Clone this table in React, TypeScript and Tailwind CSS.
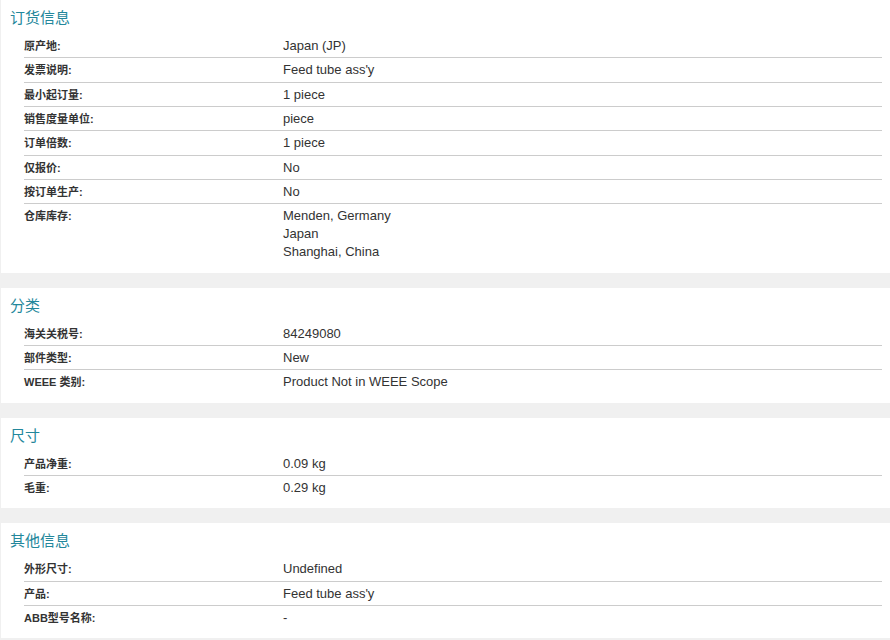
const sections = [
  {
    title: "订货信息",
    rows: [
      ["原产地:", ["Japan (JP)"]],
      ["发票说明:", ["Feed tube ass'y"]],
      ["最小起订量:", ["1 piece"]],
      ["销售度量单位:", ["piece"]],
      ["订单倍数:", ["1 piece"]],
      ["仅报价:", ["No"]],
      ["按订单生产:", ["No"]],
      ["仓库库存:", ["Menden, Germany", "Japan", "Shanghai, China"]],
    ],
  },
  {
    title: "分类",
    rows: [
      ["海关关税号:", ["84249080"]],
      ["部件类型:", ["New"]],
      ["WEEE 类别:", ["Product Not in WEEE Scope"]],
    ],
  },
  {
    title: "尺寸",
    rows: [
      ["产品净重:", ["0.09 kg"]],
      ["毛重:", ["0.29 kg"]],
    ],
  },
  {
    title: "其他信息",
    rows: [
      ["外形尺寸:", ["Undefined"]],
      ["产品:", ["Feed tube ass'y"]],
      ["ABB型号名称:", ["-"]],
    ],
  },
] as { title: string; rows: [string, string[]][] }[]

function Section({ title, rows }: { title: string; rows: [string, string[]][] }) {
  return (
    <div className="ml-[1px] mb-[15px] bg-white pt-[8px] pb-[9px]">
      <h2 className="pl-[9px] h-[20px] leading-[20px] text-[15px] text-[#23879b] mb-[6px]">{title}</h2>
      <div className="ml-[23px] mr-[8px]">
        {rows.map(([label, values], i) => (
          <div
            key={label}
            className={`flex pt-[3px] pb-[2.33px] ${i < rows.length - 1 ? "border-b border-[#cccccc]" : ""}`}
          >
            <div className="w-[259px] shrink-0 text-[11px] font-bold leading-[18px] text-[#333]">{label}</div>
            <div className="text-[13px] leading-[18px] text-[#333]">
              {values.map((v) => (
                <div key={v}>{v}</div>
              ))}
            </div>
          </div>
        ))}
      </div>
    </div>
  )
}

export default function App() {
  return (
    <div
      className="w-[890px] h-[640px] overflow-hidden bg-[#f0f0f0]"
      style={{ fontFamily: '"Liberation Sans", Arial, "Noto Sans CJK SC", sans-serif' }}
    >
      {sections.map((s) => (
        <Section key={s.title} title={s.title} rows={s.rows} />
      ))}
    </div>
  )
}
